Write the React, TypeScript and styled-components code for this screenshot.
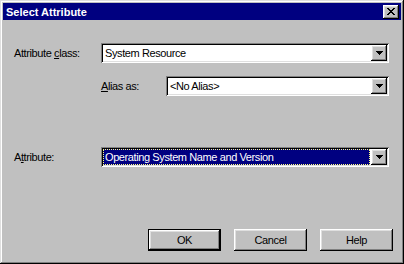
import React from "react";
import styled, { createGlobalStyle } from "styled-components";

const GlobalStyle = createGlobalStyle`
  html, body {
    margin: 0;
    padding: 0;
    background: #c0c0c0;
  }
  * {
    box-sizing: border-box;
  }
`;

const raised = `
  box-shadow: inset -1px -1px #000, inset 1px 1px #fff,
    inset -2px -2px #808080, inset 2px 2px #dfdfdf;
`;

const DownArrow = () => (
  <svg width="7" height="4" viewBox="0 0 7 4" shapeRendering="crispEdges">
    <rect x="0" y="0" width="7" height="1" fill="#000" />
    <rect x="1" y="1" width="5" height="1" fill="#000" />
    <rect x="2" y="2" width="3" height="1" fill="#000" />
    <rect x="3" y="3" width="1" height="1" fill="#000" />
  </svg>
);

const CloseGlyph = () => (
  <svg width="8" height="7" viewBox="0 0 8 7" shapeRendering="crispEdges">
    <rect x="0" y="0" width="2" height="1" fill="#000" />
    <rect x="6" y="0" width="2" height="1" fill="#000" />
    <rect x="1" y="1" width="2" height="1" fill="#000" />
    <rect x="5" y="1" width="2" height="1" fill="#000" />
    <rect x="2" y="2" width="4" height="1" fill="#000" />
    <rect x="3" y="3" width="2" height="1" fill="#000" />
    <rect x="2" y="4" width="4" height="1" fill="#000" />
    <rect x="1" y="5" width="2" height="1" fill="#000" />
    <rect x="5" y="5" width="2" height="1" fill="#000" />
    <rect x="0" y="6" width="2" height="1" fill="#000" />
    <rect x="6" y="6" width="2" height="1" fill="#000" />
  </svg>
);

type ComboProps = {
  value: string;
  selected?: boolean;
};

const Combo: React.FC<ComboProps> = ({ value, selected }) => {
  return (
    <SCombo>
      <SComboText selected={selected}>{value}</SComboText>
      <SArrowButton>
        <DownArrow />
      </SArrowButton>
    </SCombo>
  );
};

const App = () => {
  return (
    <SWindow>
      <GlobalStyle />
      <STitleBar>
        <STitle>Select Attribute</STitle>
        <SCloseButton>
          <CloseGlyph />
        </SCloseButton>
      </STitleBar>
      <SBody>
        <SRow top={23}>
          <SLabel width={87}>
            Attribute <u>c</u>lass:
          </SLabel>
          <Combo value="System Resource" />
        </SRow>
        <SRow top={13}>
          <SLabel width={87}></SLabel>
          <SLabel width={65}>
            <u>A</u>lias as:
          </SLabel>
          <Combo value="<No Alias>" />
        </SRow>
        <SRow top={51}>
          <SLabel width={87}>
            A<u>t</u>tribute:
          </SLabel>
          <Combo value="Operating System Name and Version" selected />
        </SRow>
        <SButtonRow>
          <SButton isdefault>OK</SButton>
          <SButton>Cancel</SButton>
          <SButton>Help</SButton>
        </SButtonRow>
      </SBody>
    </SWindow>
  );
};

export default App;

const SWindow = styled.div`
  width: 404px;
  height: 264px;
  background: #c0c0c0;
  padding: 3px;
  display: flex;
  flex-direction: column;
  font-family: "Liberation Sans", Arial, sans-serif;
  font-size: 11px;
  letter-spacing: -0.4px;
  color: #000;
  box-shadow: inset -1px -1px #000, inset 1px 1px #dfdfdf,
    inset -2px -2px #808080, inset 2px 2px #fff;
`;

const STitleBar = styled.div`
  height: 17px;
  background: #000080;
  display: flex;
  align-items: center;
  justify-content: space-between;
  padding: 0 2px 0 3px;
`;

const STitle = styled.span`
  color: #fff;
  font-weight: bold;
  font-size: 11px;
  letter-spacing: 0;
`;

const SCloseButton = styled.div`
  width: 16px;
  height: 14px;
  background: #c0c0c0;
  display: flex;
  align-items: center;
  justify-content: center;
  padding-right: 1px;
  ${raised}
`;

const SBody = styled.div`
  flex: 1;
  display: flex;
  flex-direction: column;
  padding: 0 8px 0 11px;
`;

const SRow = styled.div<{ top: number }>`
  display: flex;
  align-items: center;
  margin-top: ${(props) => props.top}px;
  padding-right: 4px;
`;

const SLabel = styled.div<{ width: number }>`
  width: ${(props) => props.width}px;
  flex: none;
  white-space: nowrap;
`;

const SCombo = styled.div`
  flex: 1;
  height: 20px;
  background: #fff;
  display: flex;
  align-items: center;
  padding: 2px;
  box-shadow: inset 1px 1px #808080, inset -1px -1px #fff,
    inset 2px 2px #000, inset -2px -2px #dfdfdf;
`;

const SComboText = styled.div<{ selected?: boolean }>`
  flex: 1;
  height: 100%;
  display: flex;
  align-items: center;
  padding-left: 2px;
  margin-right: 1px;
  white-space: nowrap;
  overflow: hidden;
  background: ${(props) => (props.selected ? "#000080" : "transparent")};
  color: ${(props) => (props.selected ? "#fff" : "#000")};
  outline: ${(props) => (props.selected ? "1px dotted #ffff80" : "none")};
  outline-offset: -1px;
`;

const SArrowButton = styled.div`
  width: 16px;
  height: 100%;
  flex: none;
  background: #c0c0c0;
  display: flex;
  align-items: center;
  justify-content: center;
  ${raised}
`;

const SButtonRow = styled.div`
  display: flex;
  justify-content: flex-end;
  gap: 13px;
  margin-top: 62px;
`;

const SButton = styled.div<{ isdefault?: boolean }>`
  width: 73px;
  height: 22px;
  display: flex;
  align-items: center;
  justify-content: center;
  background: #c0c0c0;
  ${(props) =>
    props.isdefault
      ? `box-shadow: inset 0 0 0 1px #000, inset -2px -2px #000, inset 2px 2px #fff,
    inset -3px -3px #808080, inset 3px 3px #dfdfdf;`
      : raised}
`;
